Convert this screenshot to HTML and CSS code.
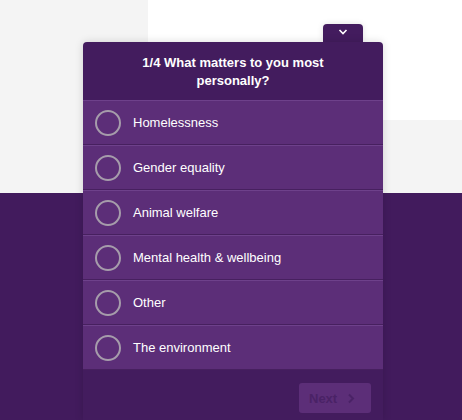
FILE: index.html
```html
<!DOCTYPE html>
<html lang="en">
<head>
    <meta charset="UTF-8">
    <meta name="viewport" content="width=device-width, initial-scale=1.0">
    <title>Survey</title>
    <link rel="stylesheet" href="styles.css">
</head>
<body>
    <div class="page">
        <div class="top">
            <div class="side"></div>
            <div class="main">
                <div class="white"></div>
                <div class="grey"></div>
            </div>
        </div>
        <div class="bottom"></div>
    </div>

    <div class="widget">
        <button class="toggle">
            <svg width="10" height="6" viewBox="0 0 10 6"><path d="M1.5 1 L5 4.5 L8.5 1" fill="none" stroke="#fff" stroke-width="1.6"/></svg>
        </button>
        <div class="card">
            <div class="question">1/4 What matters to you most personally?</div>
            <ul class="options">
                <li class="option"><span class="radio"></span>Homelessness</li>
                <li class="option"><span class="radio"></span>Gender equality</li>
                <li class="option"><span class="radio"></span>Animal welfare</li>
                <li class="option"><span class="radio"></span>Mental health &amp; wellbeing</li>
                <li class="option"><span class="radio"></span>Other</li>
                <li class="option"><span class="radio"></span>The environment</li>
            </ul>
            <div class="footer">
                <button class="next">Next
                    <svg width="8" height="11" viewBox="0 0 8 11"><path d="M2 1.5 L6 5.5 L2 9.5" fill="none" stroke="#4a2266" stroke-width="2"/></svg>
                </button>
            </div>
        </div>
    </div>
</body>
</html>
```

FILE: styles.css
```css
body {
    margin: 0;
    font-family: 'Liberation Sans', Arial, sans-serif;
    overflow: hidden;
    position: relative;
    height: 420px;
}

.page {
    display: flex;
    flex-direction: column;
    height: 420px;
}

.top {
    display: flex;
    height: 193px;
}

.side {
    width: 148px;
    background-color: #f4f4f4;
}

.main {
    flex: 1;
    display: flex;
    flex-direction: column;
}

.white {
    height: 120px;
    background-color: #fff;
}

.grey {
    flex: 1;
    background-color: #f4f4f4;
}

.bottom {
    flex: 1;
    background-color: #421b5d;
}

.widget {
    position: absolute;
    top: 24px;
    left: 83px;
    width: 300px;
}

.toggle {
    display: flex;
    align-items: center;
    justify-content: center;
    margin-left: 240px;
    width: 40px;
    height: 18px;
    padding: 0 0 2px;
    border: none;
    border-radius: 4px 4px 0 0;
    background-color: #431c5e;
    box-shadow: 0 0 6px rgba(0, 0, 0, 0.12);
}

.card {
    position: relative;
    background-color: #431c5e;
    border-radius: 4px 4px 0 0;
    box-shadow: 0 0 8px rgba(0, 0, 0, 0.15);
}

.question {
    height: 58px;
    box-sizing: border-box;
    padding: 12px 40px 0;
    color: #fff;
    font-size: 13px;
    font-weight: bold;
    line-height: 18px;
    text-align: center;
}

.options {
    list-style: none;
    margin: 0;
    padding: 0;
}

.option {
    display: flex;
    align-items: center;
    height: 43px;
    padding-left: 12px;
    background-color: #5c2e78;
    border-top: 1px solid #6e418b;
    border-bottom: 1px solid #47205f;
    color: #fff;
    font-size: 13px;
}

.radio {
    width: 22px;
    height: 22px;
    border: 2px solid #a69cab;
    border-radius: 50%;
    margin-right: 12px;
}

.footer {
    display: flex;
    justify-content: flex-end;
    height: 50px;
    padding: 13px 12px 0;
    box-sizing: border-box;
}

.next {
    display: flex;
    align-items: center;
    gap: 10px;
    width: 72px;
    height: 30px;
    padding: 0 0 0 10px;
    border: none;
    border-radius: 3px;
    background-color: #5c2e78;
    color: #4a2266;
    font-family: 'Liberation Sans', Arial, sans-serif;
    font-size: 13px;
    font-weight: bold;
}
```
